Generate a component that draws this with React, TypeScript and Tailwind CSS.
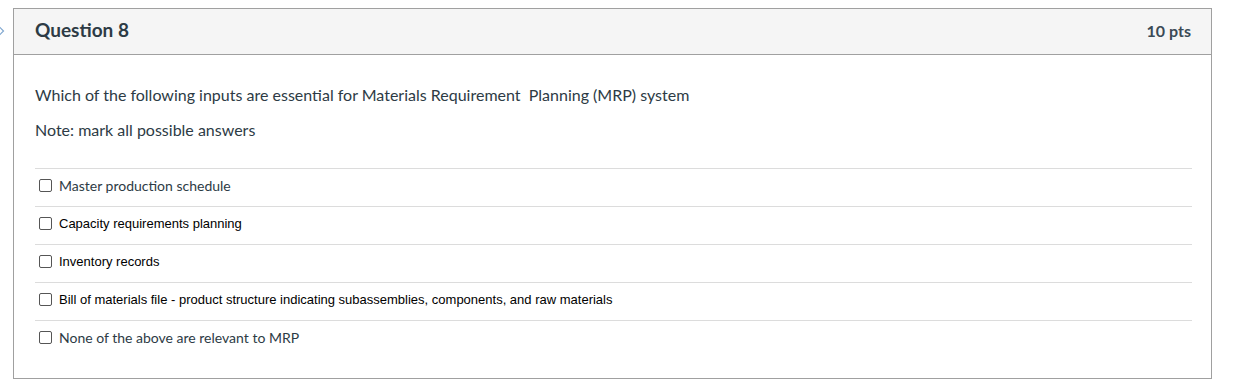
import React from 'react';

const answers = [
  { text: 'Master production schedule', font: 'lato' },
  { text: 'Capacity requirements planning', font: 'arial' },
  { text: 'Inventory records', font: 'arial' },
  { text: 'Bill of materials file - product structure indicating subassemblies, components, and raw materials', font: 'arial' },
  { text: 'None of the above are relevant to MRP', font: 'lato' },
];

const App: React.FC = () => {
  return (
    <div className="w-[1237px] h-[390px] bg-white flex items-start pt-2 overflow-hidden">
      <div className="w-[13px] shrink-0 pt-[16px]">
        <svg width="13" height="14" viewBox="0 0 13 14">
          <path d="M-2 1.5 L3.5 7 L-2 12.5" fill="none" stroke="#7fa6cf" strokeWidth="1.2" />
        </svg>
      </div>
      <div className="w-[1199px] h-[371px] border border-[#a0a0a0] flex flex-col">
        <div className="h-[46px] shrink-0 bg-[#f5f5f5] border-b border-[#a0a0a0] flex items-center justify-between pl-[21px] pr-[20px] pb-[2px] font-['Lato',sans-serif] text-[#2d3b45]">
          <span className="text-[19px] font-bold">Question 8</span>
          <span className="text-[16px] font-bold text-[#3b4a55]">10 pts</span>
        </div>
        <div className="px-[21px] pr-[19px] pt-[30px] font-['Lato',sans-serif] text-[#2d3b45]">
          <p className="text-[16px] leading-[20px]">
            Which of the following inputs are essential for Materials Requirement&nbsp; Planning (MRP) system
          </p>
          <p className="text-[16px] leading-[20px] mt-[15px]">Note: mark all possible answers</p>
          <div className="mt-[28px]">
            {answers.map((a) => (
              <div key={a.text} className="h-[38px] border-t border-[#dcdcdc] flex items-center pl-[4px] pb-[4px] gap-[7px]">
                <span className="w-[13px] h-[13px] border border-[#555] rounded-[2px] bg-white shrink-0" />
                <span
                  className={
                    a.font === 'lato'
                      ? "font-['Lato',sans-serif] text-[14px] text-[#2d3b45]"
                      : "font-['Liberation_Sans',Arial,sans-serif] text-[13px] text-black"
                  }
                >
                  {a.text}
                </span>
              </div>
            ))}
          </div>
        </div>
      </div>
    </div>
  );
};

export default App;
